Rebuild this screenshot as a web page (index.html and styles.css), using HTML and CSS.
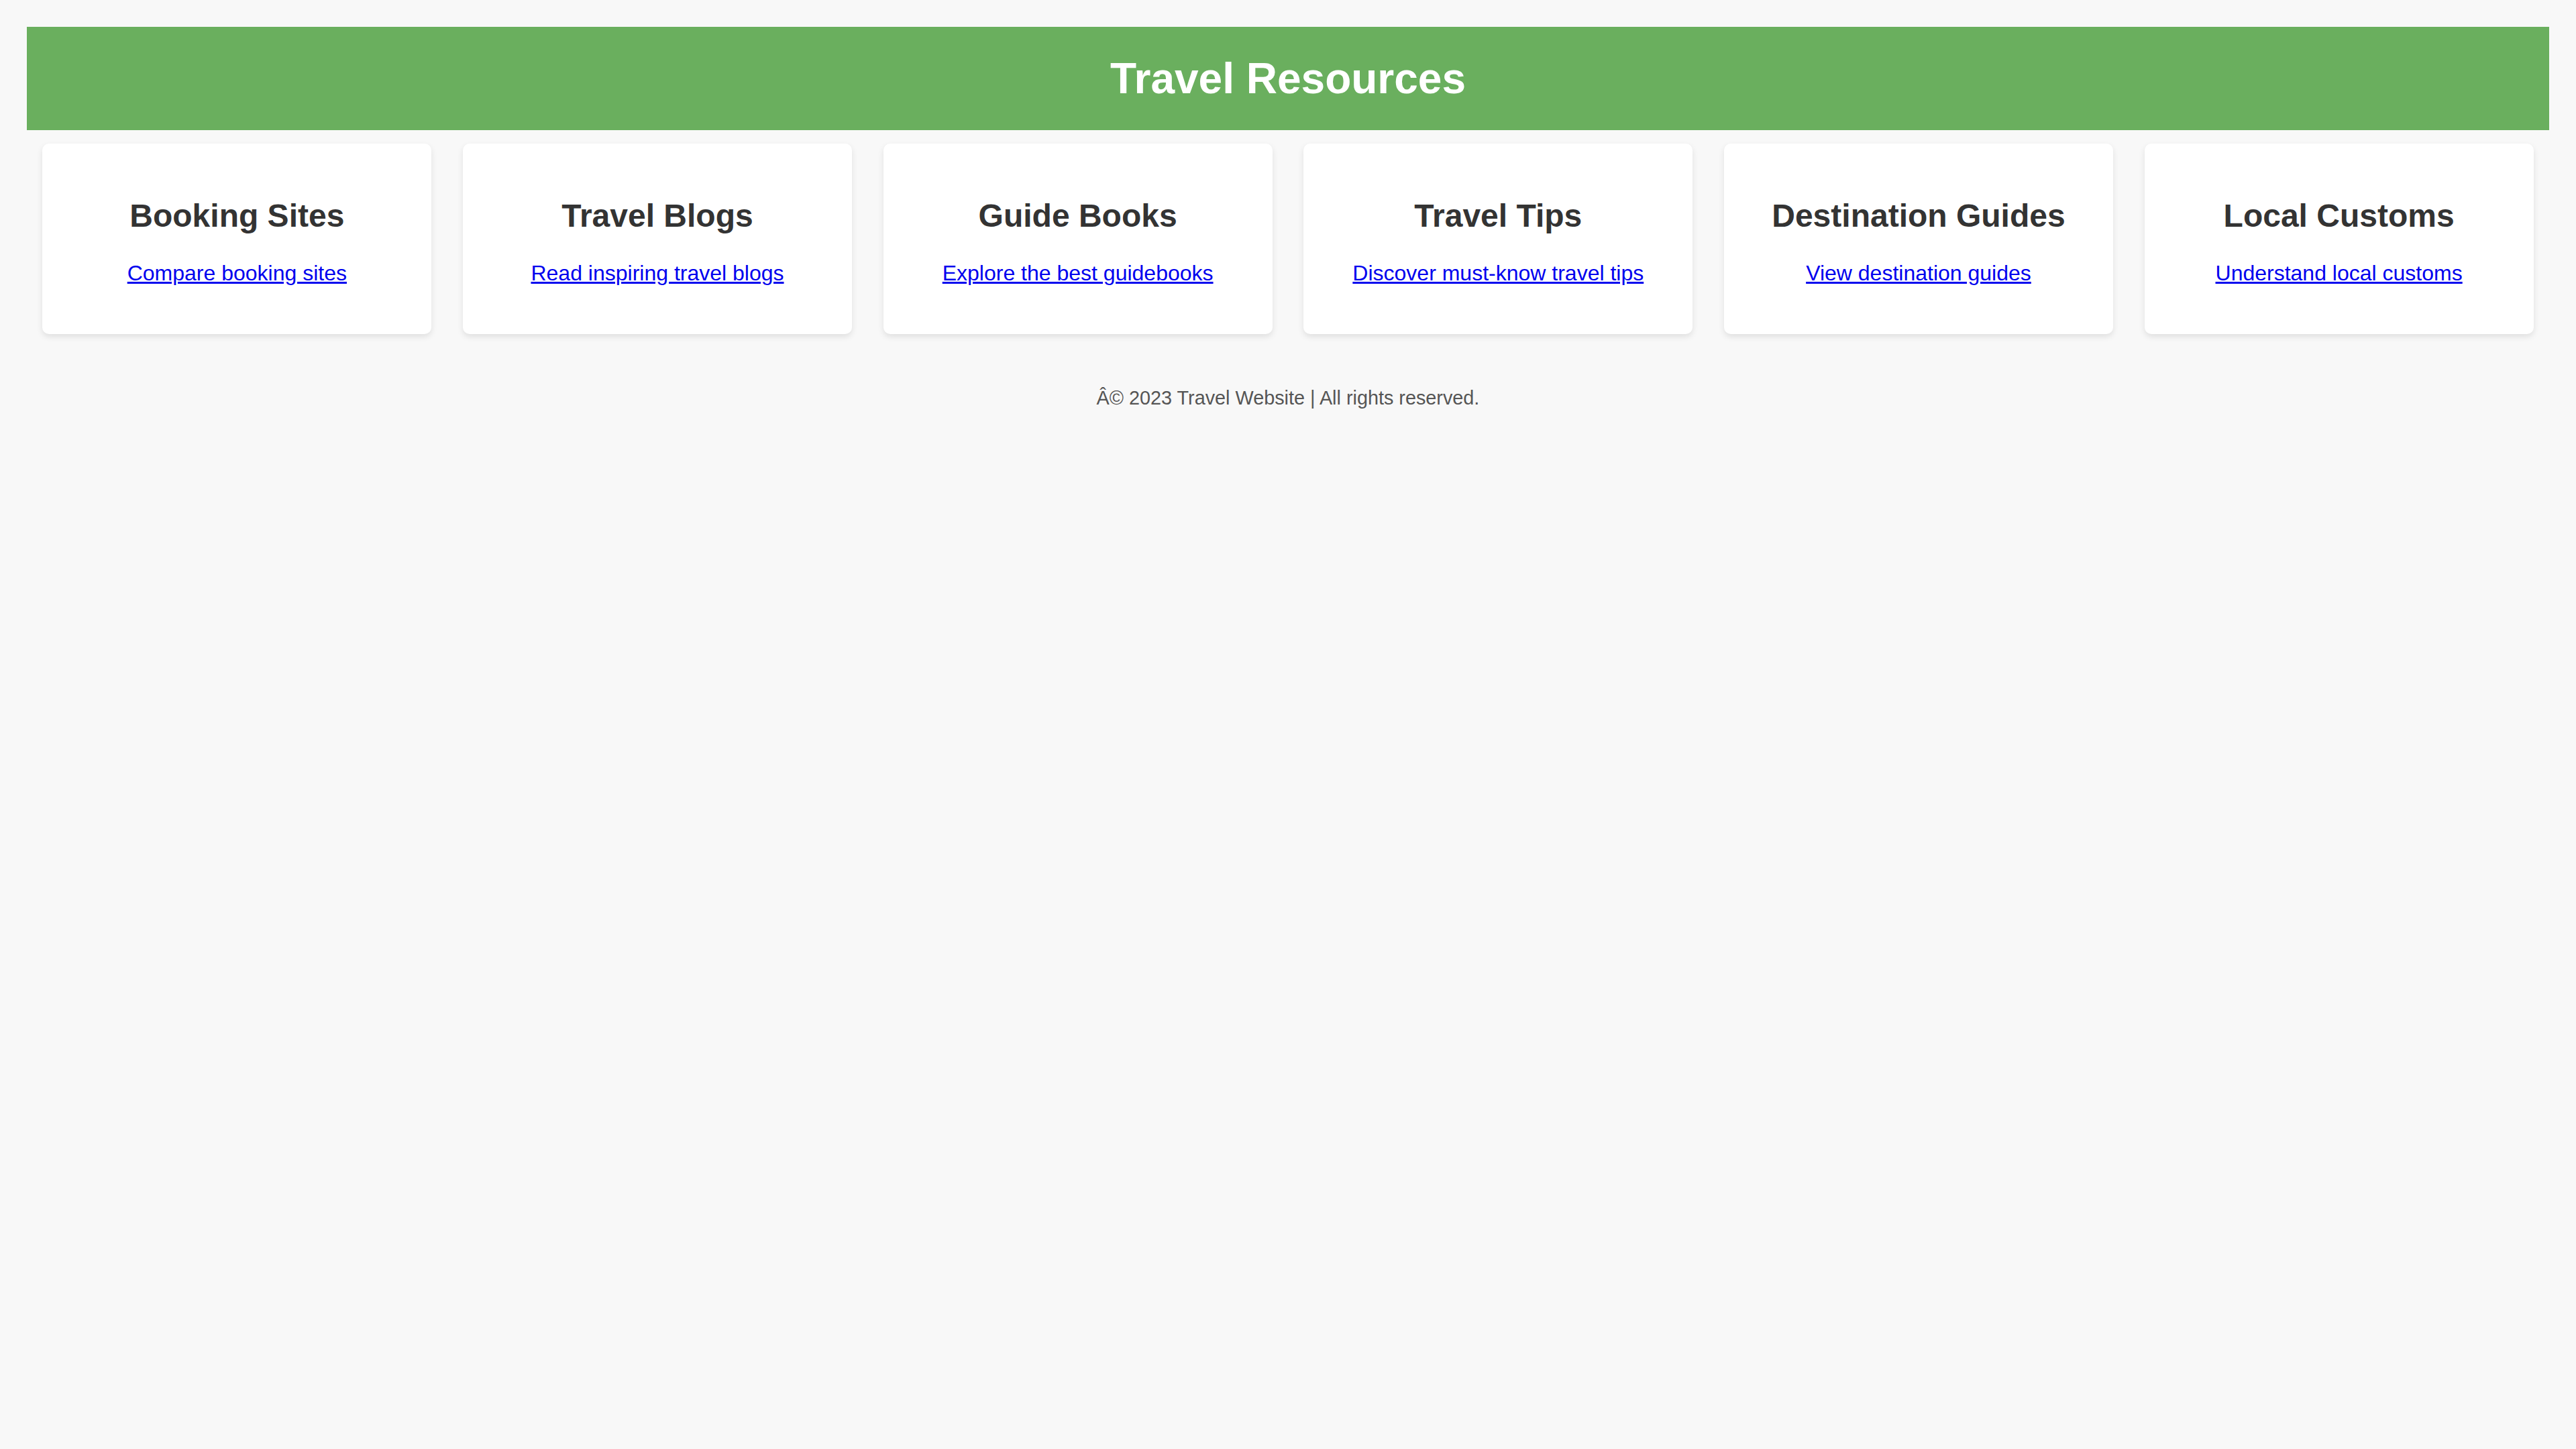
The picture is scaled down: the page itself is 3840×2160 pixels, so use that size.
FILE: index.html
```html
<!DOCTYPE html>
<html lang="en">
<head>
<meta charset="utf-8">
<title>Travel Resources</title>
<link rel="stylesheet" href="styles.css">
</head>
<body>
<header class="site-header">
  <h1 class="site-title">Travel Resources</h1>
</header>
<main class="cards">
  <section class="card">
    <h2 class="card-title">Booking Sites</h2>
    <p class="card-text"><a href="#">Compare booking sites</a></p>
  </section>
  <section class="card">
    <h2 class="card-title">Travel Blogs</h2>
    <p class="card-text"><a href="#">Read inspiring travel blogs</a></p>
  </section>
  <section class="card">
    <h2 class="card-title">Guide Books</h2>
    <p class="card-text"><a href="#">Explore the best guidebooks</a></p>
  </section>
  <section class="card">
    <h2 class="card-title">Travel Tips</h2>
    <p class="card-text"><a href="#">Discover must-know travel tips</a></p>
  </section>
  <section class="card">
    <h2 class="card-title">Destination Guides</h2>
    <p class="card-text"><a href="#">View destination guides</a></p>
  </section>
  <section class="card">
    <h2 class="card-title">Local Customs</h2>
    <p class="card-text"><a href="#">Understand local customs</a></p>
  </section>
</main>
<footer class="site-footer">
  <p class="footer-text">Â© 2023 Travel Website | All rights reserved.</p>
</footer>
</body>
</html>
```
FILE: styles.css
```css
html {
  background: #f8f8f8;
}
body {
  margin: 40px;
  font-family: "Liberation Sans", Arial, sans-serif;
  background: #f8f8f8;
  color: #333333;
}
.site-header {
  background: #6aaf5e;
  padding: 40px;
  text-align: center;
}
.site-title {
  margin: 0;
  font-size: 64px;
  font-weight: bold;
  color: #ffffff;
}
.cards {
  display: flex;
  justify-content: space-around;
}
.card {
  width: 500px;
  margin: 20px;
  padding: 40px;
  background: #ffffff;
  border-radius: 10px;
  box-shadow: 0 4px 10px rgba(0, 0, 0, 0.1);
  text-align: center;
}
.card-title {
  margin: 40px 0;
  font-size: 48px;
  font-weight: bold;
  color: #333333;
}
.card-text {
  margin: 32px 0;
  font-size: 32px;
}
.card-text a {
  color: #0000ee;
  text-decoration: underline;
}
.site-footer {
  padding: 40px 0;
  text-align: center;
}
.footer-text {
  margin: 19px 0;
  font-size: 28.8px;
  color: #555555;
}
```
